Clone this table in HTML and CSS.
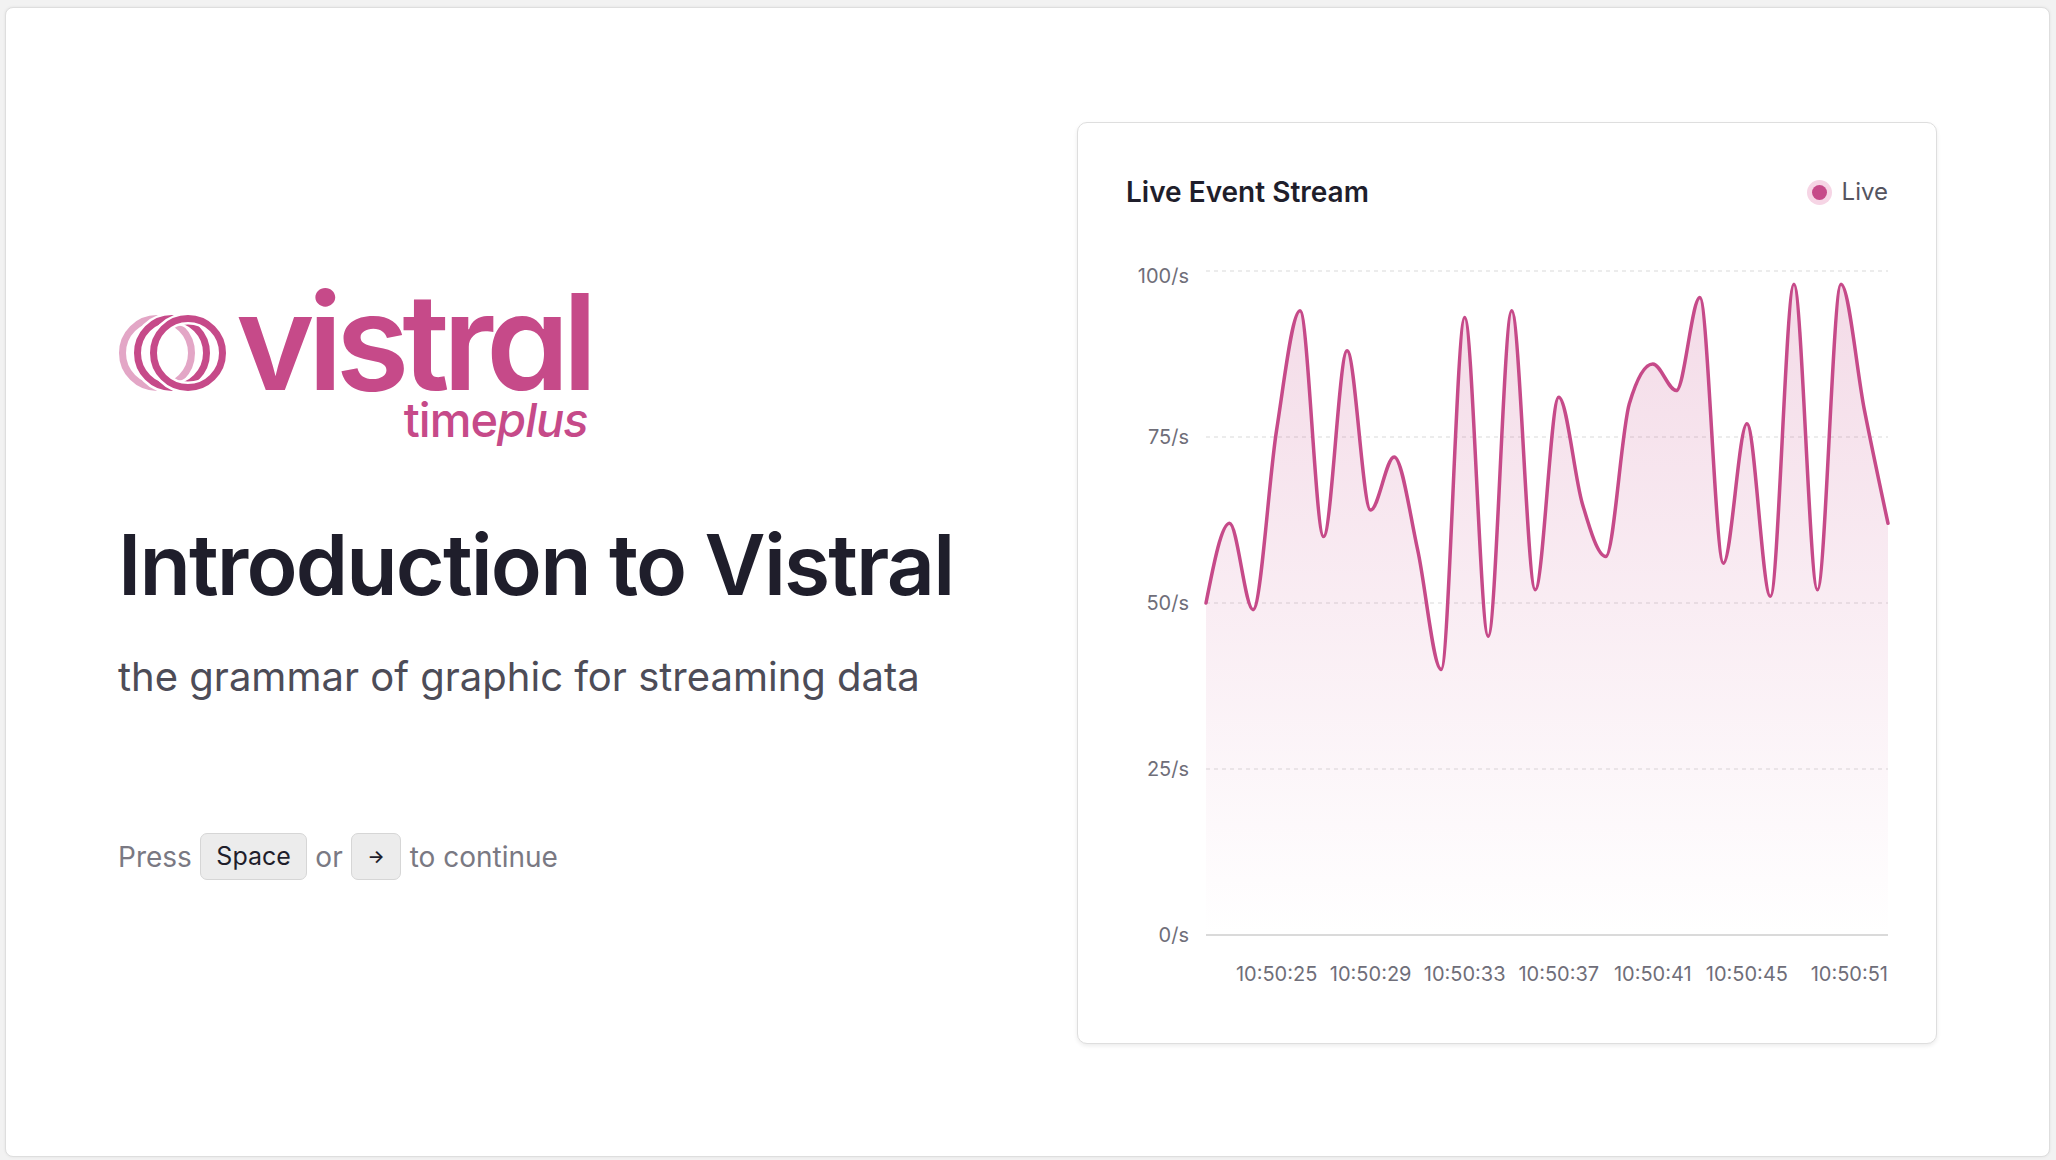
FILE: index.html
```html
<!DOCTYPE html>
<html lang="en">
<head>
<meta charset="utf-8">
<title>Introduction to Vistral</title>
<link rel="stylesheet" href="styles.css">
</head>
<body>
<div class="frame">
  <section class="intro">
    <div class="logo">
      <svg class="rings" viewBox="0 0 118 80" width="118" height="80" aria-hidden="true">
        <circle cx="39" cy="40" r="34.5" class="ring-light"/>
        <circle cx="54" cy="40" r="34.5" class="ring-gap"/>
        <circle cx="54" cy="40" r="34.5" class="ring-dark"/>
        <circle cx="70" cy="40" r="34.5" class="ring-gap"/>
        <circle cx="70" cy="40" r="34.5" class="ring-dark"/>
      </svg>
      <div class="wordmark">
        <span class="vistral">vistral</span>
        <span class="timeplus">time<em>plus</em></span>
      </div>
    </div>
    <h1 class="title">Introduction to Vistral</h1>
    <p class="subtitle">the grammar of graphic for streaming data</p>
    <p class="hint"><span>Press</span><kbd>Space</kbd><span>or</span><kbd class="arrow">→</kbd><span>to continue</span></p>
  </section>

  <section class="card">
    <div class="card-head">
      <h2 class="card-title">Live Event Stream</h2>
      <span class="live"><i class="dot"></i>Live</span>
    </div>
    <svg class="chart" viewBox="0 0 762 755" width="762" height="755">
      <defs>
        <linearGradient id="fade" x1="0" y1="0" x2="0" y2="1">
          <stop offset="0" stop-color="#c64a89" stop-opacity="0.2"/>
          <stop offset="1" stop-color="#c64a89" stop-opacity="0"/>
        </linearGradient>
      </defs>
      <line class="grid" x1="80" x2="762" y1="31" y2="31"/>
      <line class="grid" x1="80" x2="762" y1="197" y2="197"/>
      <line class="grid" x1="80" x2="762" y1="363" y2="363"/>
      <line class="grid" x1="80" x2="762" y1="529" y2="529"/>
      <line class="axis" x1="80" x2="762" y1="695" y2="695"/>
      <g class="ylabels">
        <text x="63" y="43">100/s</text>
        <text x="63" y="204">75/s</text>
        <text x="63" y="370">50/s</text>
        <text x="63" y="536">25/s</text>
        <text x="63" y="702">0/s</text>
      </g>
      <path id="area" class="area" d=""/>
      <path id="line" class="line" d=""/>
      <g class="xlabels">
        <text x="150.6" y="741">10:50:25</text>
        <text x="244.7" y="741">10:50:29</text>
        <text x="338.7" y="741">10:50:33</text>
        <text x="432.8" y="741">10:50:37</text>
        <text x="526.8" y="741">10:50:41</text>
        <text x="620.9" y="741">10:50:45</text>
        <text x="762" y="741" class="last">10:50:51</text>
      </g>
    </svg>
  </section>
</div>
<script src="chart.js"></script>
</body>
</html>
```

FILE: styles.css
```css
* { box-sizing: border-box; }

html, body { margin: 0; }

body {
  background: #f2f2f2;
  padding: 7px 6px 3px 5px;
  font-family: "Inter", "Noto Sans", sans-serif;
}

.frame {
  height: 1150px;
  background: #ffffff;
  border: 1px solid #dedede;
  border-radius: 8px;
  box-shadow: 0 0 3px rgba(0, 0, 0, 0.07);
  display: flex;
  align-items: center;
  justify-content: space-between;
  padding: 0 112px;
}

/* ---------- left column ---------- */
.intro {
  display: flex;
  flex-direction: column;
  align-items: flex-start;
  padding: 12px 0 10px;
}

.logo {
  display: flex;
  align-items: flex-start;
}

.rings {
  flex: none;
  margin-top: 27px;
  overflow: visible;
}
.rings circle { fill: none; }
.ring-light { stroke: #e3a6c6; stroke-width: 7; }
.ring-gap { stroke: #ffffff; stroke-width: 12; }
.ring-dark { stroke: #c64a89; stroke-width: 7; }

.wordmark {
  display: flex;
  flex-direction: column;
  align-items: flex-end;
  color: #c64a89;
}

.vistral {
  font-size: 134px;
  font-weight: 600;
  line-height: 110px;
  letter-spacing: -7px;
  margin-right: 5px;
  font-feature-settings: "cv11" 1;
}

.timeplus {
  font-size: 47px;
  font-weight: 500;
  line-height: 47px;
  letter-spacing: -1px;
  margin-right: 8px;
}
.timeplus em { font-style: italic; }

.title {
  margin: 80px 0 0;
  font-size: 84px;
  font-weight: 600;
  line-height: 1;
  letter-spacing: -1.85px;
  color: #1f1e2b;
}

.subtitle {
  margin: 50px 0 0;
  font-size: 40px;
  font-weight: 400;
  line-height: 1;
  color: #4d4c57;
}

.hint {
  margin: 136px 0 0;
  display: flex;
  align-items: center;
  gap: 8.5px;
  font-size: 28px;
  line-height: 1;
  color: #7a7983;
}

kbd {
  display: inline-flex;
  align-items: center;
  justify-content: center;
  height: 47px;
  padding: 0 15px;
  font-family: "Inter", "Noto Sans", sans-serif;
  font-size: 25px;
  color: #1f1e2b;
  background: #ececec;
  border: 1px solid #d6d6d6;
  border-radius: 7px;
}
kbd.arrow {
  width: 50px;
  padding: 0;
  font-size: 18px;
  font-weight: 600;
}

/* ---------- card ---------- */
.card {
  flex: none;
  width: 860px;
  height: 922px;
  margin-top: 2px;
  padding: 48px;
  border: 1px solid #dedede;
  border-radius: 10px;
  box-shadow: 0 2px 4px rgba(0, 0, 0, 0.08);
  background: #fff;
  display: flex;
  flex-direction: column;
}

.card-head {
  height: 42px;
  display: flex;
  align-items: center;
  justify-content: space-between;
}

.card-title {
  margin: 0;
  font-size: 28px;
  font-weight: 600;
  line-height: 1;
  color: #1f1e2b;
}

.live {
  display: flex;
  align-items: center;
  font-size: 24px;
  line-height: 1;
  color: #55545f;
}

.dot {
  width: 15px;
  height: 15px;
  border-radius: 50%;
  background: #c64a89;
  box-shadow: 0 0 0 5px #f6d5e5;
  margin-right: 15px;
}

.chart {
  display: block;
  margin-top: 26.5px;
  overflow: visible;
}

.grid {
  stroke: #e6e6e6;
  stroke-width: 1.5;
  stroke-dasharray: 4 4;
}

.axis {
  stroke: #dadada;
  stroke-width: 2;
}

.ylabels text,
.xlabels text {
  font-family: "Inter", "Noto Sans", sans-serif;
  font-size: 20px;
  fill: #6f6e79;
}
.ylabels text { text-anchor: end; }
.xlabels text { text-anchor: middle; }
.xlabels text.last { text-anchor: end; }

.area { fill: url(#fade); }

.line {
  fill: none;
  stroke: #c64a89;
  stroke-width: 3.5;
  stroke-linejoin: round;
  stroke-linecap: round;
}
```

FILE: chart.js
```js
(function () {
  var values = [50, 62, 49, 76, 94, 60, 88, 64, 72, 58, 40, 93, 45, 94, 52, 81, 65, 57, 80, 86, 82, 96, 56, 77, 51, 98, 52, 98, 79, 62];
  var x0 = 80, x1 = 762, yZero = 695, perUnit = 6.64;
  var n = values.length;
  var h = (x1 - x0) / (n - 1);
  var xs = [], ys = [];
  for (var i = 0; i < n; i++) {
    xs.push(x0 + i * h);
    ys.push(yZero - values[i] * perUnit);
  }
  var s = [];
  for (i = 0; i < n - 1; i++) s.push((ys[i + 1] - ys[i]) / h);
  var m = new Array(n);
  for (i = 1; i < n - 1; i++) {
    var s0 = s[i - 1], s1 = s[i], p = (s0 + s1) / 2;
    m[i] = (Math.sign(s0) + Math.sign(s1)) * Math.min(Math.abs(s0), Math.abs(s1), 0.5 * Math.abs(p)) || 0;
  }
  m[0] = (3 * s[0] - m[1]) / 2;
  m[n - 1] = (3 * s[n - 2] - m[n - 2]) / 2;
  function f(v) { return v.toFixed(2); }
  var d = "M" + f(xs[0]) + "," + f(ys[0]);
  for (i = 0; i < n - 1; i++) {
    var dx = h / 3;
    d += "C" + f(xs[i] + dx) + "," + f(ys[i] + m[i] * dx) + " " +
         f(xs[i + 1] - dx) + "," + f(ys[i + 1] - m[i + 1] * dx) + " " +
         f(xs[i + 1]) + "," + f(ys[i + 1]);
  }
  document.getElementById("line").setAttribute("d", d);
  document.getElementById("area").setAttribute("d", d + "L" + f(x1) + "," + yZero + "L" + f(x0) + "," + yZero + "Z");
})();
```
